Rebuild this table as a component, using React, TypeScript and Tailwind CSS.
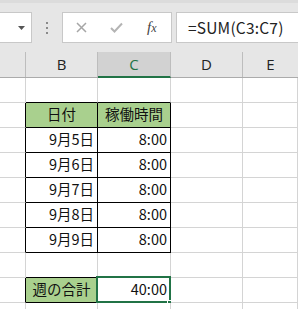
import React from "react";

const JP = "font-['Noto_Sans_CJK_JP','Noto_Sans',sans-serif]";

type Cell = { text?: string; align?: "left" | "center" | "right"; fill?: boolean; selected?: boolean };
type Row = { b?: Cell; c?: Cell };

const rows: Row[] = [
  {},
  { b: { text: "日付", align: "center", fill: true }, c: { text: "稼働時間", align: "center", fill: true } },
  { b: { text: "9月5日", align: "right" }, c: { text: "8:00", align: "right" } },
  { b: { text: "9月6日", align: "right" }, c: { text: "8:00", align: "right" } },
  { b: { text: "9月7日", align: "right" }, c: { text: "8:00", align: "right" } },
  { b: { text: "9月8日", align: "right" }, c: { text: "8:00", align: "right" } },
  { b: { text: "9月9日", align: "right" }, c: { text: "8:00", align: "right" } },
  {},
  { b: { text: "週の合計", align: "center", fill: true }, c: { text: "40:00", align: "right", selected: true } },
  {},
];

// rows that belong to a bordered table block
const inTable = (i: number) => (i >= 1 && i <= 6) || i === 8;
// rows whose bottom edge is a table edge
const blackBottom = (i: number) => (i >= 0 && i <= 8 && i !== 7) || i === 7;

function CellBox({ cell, rightBlack, bottomBlack }: { cell?: Cell; rightBlack: boolean; bottomBlack: boolean }) {
  const align =
    cell?.align === "center" ? "justify-center" : cell?.align === "right" ? "justify-end pr-[3px]" : "justify-start pl-[3px]";
  return (
    <div
      className={`relative h-[25px] flex items-center pb-[1px] border-r border-b ${
        rightBlack ? "border-r-black" : "border-r-[#d4d4d4]"
      } ${bottomBlack ? "border-b-black" : "border-b-[#d4d4d4]"} ${cell?.fill ? "bg-[#a9d08e]" : "bg-white"} ${align}`}
    >
      {cell?.text && <span className={`${JP} text-[14.5px] text-[#111] leading-none`}>{cell.text}</span>}
      {cell?.selected && (
        <>
          <div className="absolute -left-[2px] -top-[2px] -right-[1px] -bottom-[1px] border-2 border-[#217346] pointer-events-none" />
          <div className="absolute -right-[3px] -bottom-[4px] w-[6px] h-[6px] bg-[#217346] border border-white" />
        </>
      )}
    </div>
  );
}

export default function App() {
  return (
    <div className="w-[298px] h-[309px] overflow-hidden bg-white flex flex-col">
      {/* formula bar */}
      <div className="h-[52px] shrink-0 bg-[#e6e6e6] flex items-start pt-[12px] border-t-[3px] border-t-[#dcdcdc] -mt-[0px]">
        <div className="-mt-[3px] w-[32px] h-[31px] bg-white border border-l-0 border-[#c8c8c8] relative">
          <svg className="absolute left-[18px] top-[13px]" width="7" height="4" viewBox="0 0 7 4">
            <polygon points="0,0 7,0 3.5,4" fill="#555" />
          </svg>
        </div>
        <div className="-mt-[3px] w-[30px] h-[31px] flex flex-col items-center justify-center gap-[3px]">
          <div className="w-[2px] h-[2px] bg-[#8a8a8a]" />
          <div className="w-[2px] h-[2px] bg-[#8a8a8a]" />
          <div className="w-[2px] h-[2px] bg-[#8a8a8a]" />
        </div>
        <div className="-mt-[3px] w-[110px] h-[31px] bg-white border border-[#c8c8c8] flex items-center">
          <svg className="ml-[13px]" width="11" height="11" viewBox="0 0 11 11">
            <path d="M1 1 L10 10 M10 1 L1 10" stroke="#a6a6a6" strokeWidth="1.5" />
          </svg>
          <svg className="ml-[23px]" width="13" height="11" viewBox="0 0 13 11">
            <path d="M1 6 L4.5 9.5 L12 1.5" stroke="#b4b4b4" strokeWidth="2" fill="none" />
          </svg>
          <span className="ml-[24px] font-['Liberation_Serif',serif] italic text-[15px] text-[#444] leading-none">
            f<span className="text-[12px]">x</span>
          </span>
        </div>
        <div className="-mt-[3px] ml-[4px] flex-1 h-[31px] bg-white border border-r-0 border-[#c8c8c8] flex items-center pl-[11px]">
          <span className={`${JP} text-[15.5px] text-[#222] leading-none tracking-[0.2px]`}>=SUM(C3:C7)</span>
        </div>
      </div>

      {/* column headers */}
      <div className="grid grid-cols-[26px_72px_73px_72px_1fr] h-[26px] shrink-0 bg-[#e6e6e6] border-b border-b-[#ababab]">
        <div className="border-r border-r-[#bdbdbd]" />
        {["B", "C", "D", "E"].map((l) => (
          <div
            key={l}
            className={`flex items-center justify-center font-['Open_Sans',sans-serif] text-[15px] leading-none ${
              l === "C" ? "bg-[#d2d2d2] text-[#217346] border-b-2 border-b-[#217346] -mb-[1px] pt-[1px]" : "text-[#222]"
            } ${l === "E" ? "" : "border-r border-r-[#bdbdbd]"}`}
          >
            {l}
          </div>
        ))}
      </div>

      {/* cells */}
      <div className="grid grid-cols-[26px_72px_73px_72px_1fr]">
        {rows.map((r, i) => {
          const t = inTable(i);
          const bb = blackBottom(i);
          return (
            <React.Fragment key={i}>
              <CellBox rightBlack={t} bottomBlack={false} />
              <CellBox cell={r.b} rightBlack={t} bottomBlack={bb} />
              <CellBox cell={r.c} rightBlack={t} bottomBlack={bb} />
              <CellBox rightBlack={false} bottomBlack={false} />
              <CellBox rightBlack={false} bottomBlack={false} />
            </React.Fragment>
          );
        })}
      </div>
    </div>
  );
}
